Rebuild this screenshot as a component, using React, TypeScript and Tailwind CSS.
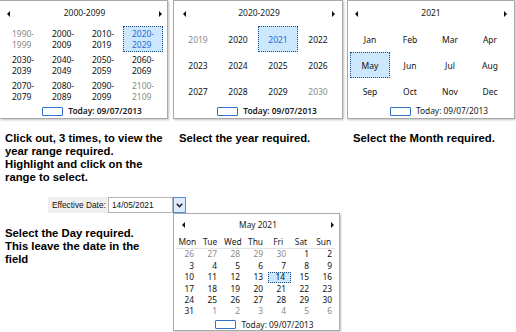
import React from "react";

const calFont = { fontFamily: '"Noto Sans", "Open Sans", sans-serif' };

const Tri = ({ dir }: { dir: "l" | "r" }) => (
  <svg width="3" height="6" viewBox="0 0 3 6">
    <path d={dir === "l" ? "M3 0L0 3L3 6Z" : "M0 0L3 3L0 6Z"} fill="#111" />
  </svg>
);

const Header = ({ title, pl, pr }: { title: string; pl: string; pr: string }) => (
  <div className={`flex h-[25px] items-center justify-between ${pl} ${pr}`}>
    <Tri dir="l" />
    <span className="text-[8.5px] text-[#1a1a1a]">{title}</span>
    <Tri dir="r" />
  </div>
);

const Today = ({ bold }: { bold?: boolean }) => (
  <div className="flex h-[15px] items-center justify-center gap-[5px] pl-[14px]">
    <span className="h-[9px] w-[21px] rounded-[1px] border border-[#2f6fcf]" />
    <span className={`text-[8.4px] text-[#1a1a1a] ${bold ? "font-semibold" : ""}`}>
      Today: 09/07/2013
    </span>
  </div>
);

type Cell = { a: string; b?: string; grey?: boolean; sel?: boolean };

const decades: Cell[] = [
  { a: "1990-", b: "1999", grey: true },
  { a: "2000-", b: "2009" },
  { a: "2010-", b: "2019" },
  { a: "2020-", b: "2029", sel: true },
  { a: "2030-", b: "2039" },
  { a: "2040-", b: "2049" },
  { a: "2050-", b: "2059" },
  { a: "2060-", b: "2069" },
  { a: "2070-", b: "2079" },
  { a: "2080-", b: "2089" },
  { a: "2090-", b: "2099" },
  { a: "2100-", b: "2109", grey: true },
];

const years: Cell[] = [
  { a: "2019", grey: true },
  { a: "2020" },
  { a: "2021", sel: true },
  { a: "2022" },
  { a: "2023" },
  { a: "2024" },
  { a: "2025" },
  { a: "2026" },
  { a: "2027" },
  { a: "2028" },
  { a: "2029" },
  { a: "2030", grey: true },
];

const months: Cell[] = [
  "Jan", "Feb", "Mar", "Apr", "May", "Jun", "Jul", "Aug", "Sep", "Oct", "Nov", "Dec",
].map((m) => ({ a: m, sel: m === "May" }));

const Grid = ({ cells, selBlack }: { cells: Cell[]; selBlack?: boolean }) => (
  <div className="grid grid-cols-[repeat(4,40px)] grid-rows-[repeat(3,26px)]">
    {cells.map((c) => (
      <div
        key={c.a}
        className={`flex items-center justify-center text-[8.5px] leading-[11px] ${
          c.sel ? "border border-dotted border-[#1d4a80] bg-[#cce8ff]" : ""
        } ${
          c.grey
            ? "text-[#8a8a8a]"
            : c.sel && !selBlack
            ? "text-[#2a6bd0]"
            : "text-[#111]"
        }`}
      >
        <div className="text-left">
          {c.a}
          {c.b && (
            <>
              <br />
              {c.b}
            </>
          )}
        </div>
      </div>
    ))}
  </div>
);

const panelCls =
  "h-[119px] border border-[#a9a9a9] bg-white shadow-[1px_1px_2px_rgba(0,0,0,0.25)]";

const weeks: [number, boolean][][] = [
  [[26, true], [27, true], [28, true], [29, true], [30, true], [1, false], [2, false]],
  [[3, false], [4, false], [5, false], [6, false], [7, false], [8, false], [9, false]],
  [[10, false], [11, false], [12, false], [13, false], [14, false], [15, false], [16, false]],
  [[17, false], [18, false], [19, false], [20, false], [21, false], [22, false], [23, false]],
  [[24, false], [25, false], [26, false], [27, false], [28, false], [29, false], [30, false]],
  [[31, false], [1, true], [2, true], [3, true], [4, true], [5, true], [6, true]],
];

const days = ["Mon", "Tue", "Wed", "Thu", "Fri", "Sat", "Sun"];

export default function App() {
  return (
    <div className="relative h-[332px] w-[516px] overflow-hidden bg-white">
      {/* top row: three picker views */}
      <div className="flex items-start" style={calFont}>
        <div className={`${panelCls} w-[168px] border-l-0 pl-[3px]`}>
          <Header title="2000-2099" pl="pl-[4px]" pr="pr-[5px]" />
          <Grid cells={decades} />
          <Today bold />
        </div>
        <div className={`${panelCls} ml-[5px] w-[170px] pl-[4px]`}>
          <Header title="2020-2029" pl="pl-[5px]" pr="pr-[7px]" />
          <Grid cells={years} />
          <Today bold />
        </div>
        <div className={`${panelCls} ml-[4px] w-[168px] pl-[2px]`}>
          <Header title="2021" pl="pl-[5px]" pr="pr-[7px]" />
          <Grid cells={months} selBlack />
          <Today />
        </div>
      </div>

      {/* instructions */}
      <div
        className="mt-[13px] flex text-[11.3px] font-bold leading-[13px] text-black"
        style={{ fontFamily: '"Liberation Sans", Arial, sans-serif' }}
      >
        <div className="w-[174px] pl-[5px]">
          Click out, 3 times, to view the
          <br />
          year range required.
          <br />
          Highlight and click on the
          <br />
          range to select.
        </div>
        <div className="w-[174px] pl-[5px]">Select the year required.</div>
        <div className="w-[168px] pl-[5px]">Select the Month required.</div>
      </div>

      {/* date field + open calendar */}
      <div className="mt-[13px]">
        <div
          className="ml-[48px] flex h-[16px] items-stretch text-[8.3px] text-[#111]"
          style={{ fontFamily: '"Liberation Sans", Arial, sans-serif' }}
        >
          <div className="flex w-[60px] items-center bg-[#f0f0f0] pl-[4px]">Effective Date:</div>
          <div className="flex w-[65px] items-center border border-[#b4b4b4] bg-white pl-[3px]">
            14/05/2021
          </div>
          <div className="flex w-[13px] items-center justify-center border border-[#4d8fd6] bg-[#dcecfc]">
            <svg width="7" height="5" viewBox="0 0 7 5">
              <path d="M0.8 0.8L3.5 3.8L6.2 0.8" fill="none" stroke="#1a1a1a" strokeWidth="1.4" />
            </svg>
          </div>
        </div>
        <div className="flex items-start">
          <div
            className="w-[173px] pl-[5px] pt-[14px] text-[11.3px] font-bold leading-[13px] text-black"
            style={{ fontFamily: '"Liberation Sans", Arial, sans-serif' }}
          >
            Select the Day required.
            <br />
            This leave the date in the
            <br />
            field
          </div>
          <div
            className="h-[118px] w-[167px] border border-[#a9a9a9] bg-white pl-[2px] shadow-[1px_1px_2px_rgba(0,0,0,0.25)]"
            style={calFont}
          >
            <div className="flex h-[22px] items-center justify-between pl-[6px] pr-[5px]">
              <Tri dir="l" />
              <span className="text-[8.4px] text-[#1a1a1a]">May 2021</span>
              <Tri dir="r" />
            </div>
            <div className="mr-[4px] flex h-[13px] items-center border-b border-[#e3e3e3] text-[8.4px] text-[#1a1a1a]">
              {days.map((d) => (
                <div key={d} className="w-[23px] text-center">
                  {d}
                </div>
              ))}
            </div>
            {weeks.map((w, i) => (
              <div key={i} className="flex h-[11.4px] items-center text-[8.4px]">
                {w.map(([n, grey], j) => (
                  <div
                    key={j}
                    className={`flex h-[11.4px] w-[23px] items-center justify-end pr-[5px] ${
                      grey ? "text-[#8a8a8a]" : "text-[#111]"
                    } ${
                      i === 2 && j === 4
                        ? "border border-dotted border-[#1d4a80] bg-[#cce8ff]"
                        : ""
                    }`}
                  >
                    {n}
                  </div>
                ))}
              </div>
            ))}
            <Today />
          </div>
        </div>
      </div>
    </div>
  );
}
